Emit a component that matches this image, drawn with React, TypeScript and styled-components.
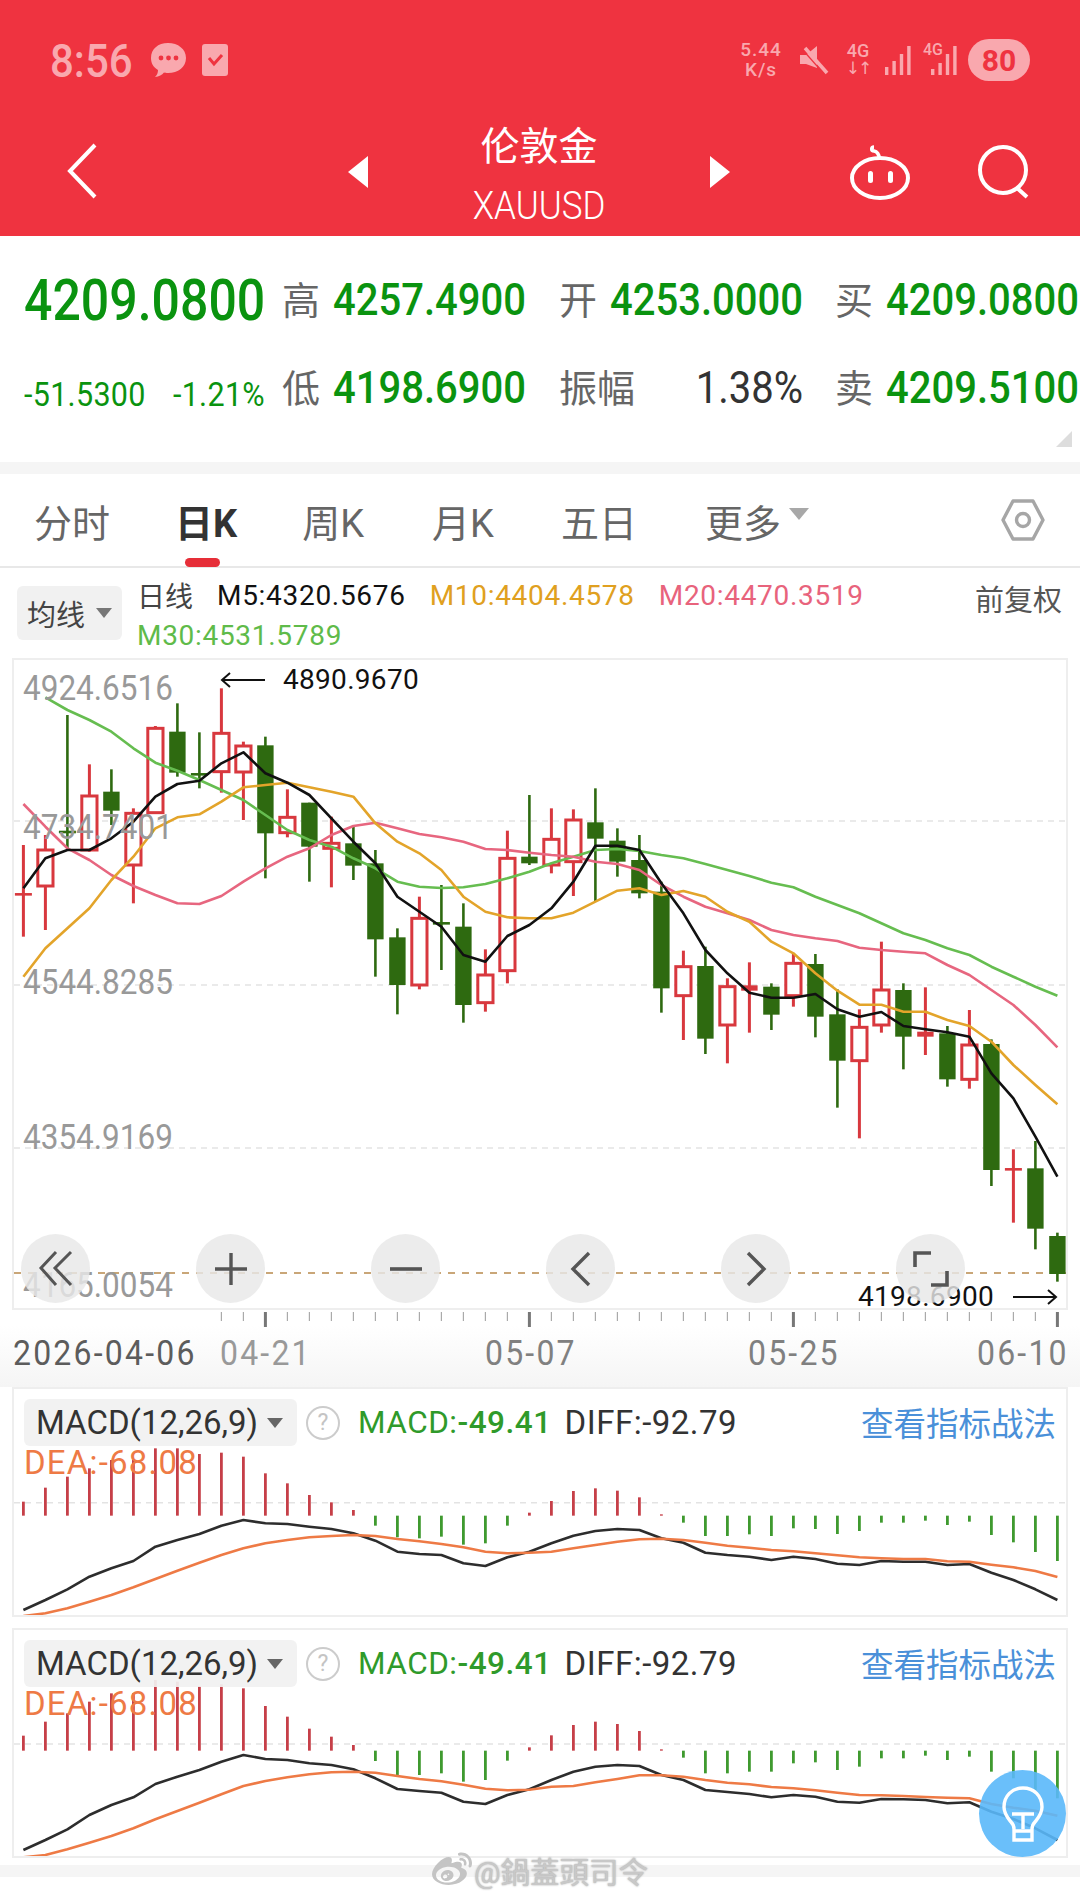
import styled, { createGlobalStyle } from 'styled-components';
import { FaWeibo } from 'react-icons/fa';

const FONT = `Roboto, "Noto Sans CJK SC", sans-serif`;
const GREEN = '#0a930f';
const PINK = '#f9a8ae';

// chart values were read off 3x crops of the picture: y = base + z / 3
const CANDLE_X = (i: number) => 23.4 + 22 * i;
const chartY = (z: number) => 480 + z / 3;
const macdY = (z: number) => 1380 + z / 3;

type Candle = [number, number, number, number, 'r' | 'g' | 'f'];

const CANDLES: Candle[] = [
  [1243, 1247, 1095, 1370, 'f'], [1110, 1218, 1065, 1350, 'r'], [1056, 1060, 705, 1110, 'g'],
  [948, 1110, 853, 1115, 'r'], [935, 992, 868, 1035, 'g'], [1000, 1155, 985, 1270, 'r'],
  [745, 998, 738, 1000, 'r'], [755, 878, 670, 890, 'g'], [883, 887, 757, 925, 'g'],
  [760, 875, 625, 938, 'r'], [798, 876, 785, 1020, 'r'], [796, 1060, 770, 1195, 'g'],
  [1012, 1058, 928, 1072, 'r'], [968, 1100, 968, 1205, 'g'], [1090, 1105, 1010, 1222, 'r'],
  [1090, 1157, 1040, 1200, 'g'], [1150, 1378, 1110, 1490, 'g'], [1372, 1515, 1345, 1603, 'g'],
  [1315, 1515, 1250, 1528, 'r'], [1330, 1334, 1215, 1470, 'g'], [1340, 1575, 1270, 1628, 'g'],
  [1485, 1568, 1408, 1595, 'r'], [1135, 1472, 1052, 1510, 'r'], [1130, 1150, 945, 1155, 'g'],
  [1078, 1155, 985, 1180, 'r'], [1020, 1145, 988, 1248, 'r'], [1027, 1076, 925, 1265, 'g'],
  [1082, 1145, 1045, 1190, 'g'], [1140, 1240, 1065, 1255, 'g'], [1235, 1525, 1205, 1598, 'g'],
  [1460, 1547, 1412, 1680, 'r'], [1458, 1676, 1400, 1722, 'g'], [1520, 1635, 1495, 1750, 'r'],
  [1516, 1532, 1447, 1658, 'f'], [1520, 1604, 1510, 1650, 'g'], [1450, 1547, 1420, 1580, 'r'],
  [1452, 1610, 1422, 1672, 'g'], [1603, 1742, 1528, 1883, 'g'], [1642, 1742, 1588, 1975, 'r'],
  [1530, 1635, 1385, 1658, 'r'], [1530, 1670, 1510, 1768, 'g'], [1655, 1670, 1522, 1725, 'f'],
  [1660, 1798, 1638, 1820, 'g'], [1695, 1798, 1590, 1826, 'r'], [1692, 2070, 1678, 2118, 'g'],
  [2068, 2072, 2008, 2228, 'f'], [2065, 2246, 1983, 2308, 'g'], [2268, 2382, 2258, 2405, 'g'],
];

const M5 = [1225, 1135, 1110, 1110, 1075, 1025, 950, 912, 902, 850, 817, 880, 908, 945, 1015, 1085, 1150, 1250, 1295, 1340, 1425, 1445, 1368, 1335, 1285, 1205, 1097, 1097, 1110, 1210, 1300, 1410, 1480, 1538, 1553, 1553, 1542, 1588, 1610, 1596, 1638, 1648, 1657, 1670, 1780, 1855, 1970, 2090];
const M10 = [1490, 1405, 1345, 1285, 1200, 1130, 1045, 1012, 1003, 965, 922, 915, 908, 922, 935, 950, 1030, 1085, 1120, 1170, 1250, 1295, 1312, 1315, 1315, 1298, 1265, 1232, 1225, 1245, 1233, 1250, 1295, 1325, 1385, 1420, 1480, 1532, 1574, 1574, 1595, 1595, 1620, 1638, 1685, 1755, 1815, 1873];
const M20 = [972, 1040, 1105, 1140, 1185, 1218, 1245, 1270, 1272, 1248, 1205, 1165, 1130, 1105, 1065, 1038, 1028, 1045, 1062, 1072, 1085, 1107, 1110, 1118, 1125, 1130, 1145, 1152, 1170, 1215, 1250, 1280, 1300, 1320, 1350, 1365, 1375, 1383, 1403, 1410, 1415, 1420, 1455, 1485, 1530, 1575, 1635, 1702];
const M30 = [652, 690, 720, 755, 805, 848, 872, 900, 930, 960, 1005, 1050, 1080, 1100, 1135, 1165, 1205, 1220, 1224, 1222, 1212, 1195, 1175, 1150, 1130, 1110, 1107, 1113, 1125, 1135, 1152, 1170, 1188, 1208, 1222, 1250, 1275, 1300, 1330, 1360, 1380, 1405, 1425, 1460, 1490, 1520, 1547];

const MACD_PANELS = [
  {
    top: 1387,
    zero: 368,
    base: 407,
    bars: [365, 323, 290, 265, 240, 240, 205, 205, 222, 218, 230, 280, 310, 345, 367, 390, 437, 472, 475, 470, 494, 490, 437, 398, 363, 333, 325, 332, 352, 403, 428, 468, 468, 463, 468, 445, 447, 462, 453, 428, 428, 422, 435, 425, 465, 487, 516, 543],
    diff: [690, 660, 628, 590, 565, 543, 500, 480, 462, 437, 420, 430, 432, 440, 447, 460, 482, 515, 522, 525, 550, 558, 532, 515, 490, 467, 453, 447, 450, 475, 488, 518, 525, 530, 540, 530, 537, 551, 555, 543, 545, 545, 555, 552, 578, 600, 628, 660],
    dea: [708, 700, 685, 665, 645, 622, 597, 572, 548, 525, 505, 490, 480, 472, 468, 465, 468, 477, 484, 492, 502, 515, 520, 518, 515, 505, 495, 485, 478, 476, 480, 488, 497, 503, 510, 514, 520, 526, 532, 535, 537, 537, 544, 545, 554, 562, 573, 591],
  },
  {
    top: 1628,
    zero: 1092,
    base: 1112,
    bars: [1067, 1025, 1000, 965, 940, 940, 900, 905, 918, 913, 925, 978, 1010, 1046, 1070, 1095, 1143, 1185, 1185, 1180, 1205, 1200, 1142, 1102, 1066, 1035, 1025, 1032, 1053, 1108, 1133, 1180, 1180, 1175, 1175, 1150, 1147, 1170, 1160, 1135, 1135, 1127, 1140, 1130, 1175, 1195, 1230, 1255],
    diff: [1410, 1380, 1348, 1305, 1275, 1252, 1212, 1190, 1170, 1145, 1125, 1137, 1140, 1150, 1155, 1168, 1195, 1227, 1233, 1238, 1265, 1272, 1245, 1228, 1200, 1175, 1160, 1155, 1158, 1185, 1200, 1230, 1236, 1242, 1252, 1245, 1250, 1265, 1268, 1257, 1258, 1260, 1270, 1267, 1295, 1317, 1345, 1380],
    dea: [1432, 1425, 1408, 1388, 1368, 1345, 1318, 1293, 1268, 1243, 1218, 1203, 1192, 1183, 1177, 1175, 1178, 1188, 1197, 1204, 1214, 1226, 1231, 1229, 1220, 1218, 1207, 1197, 1186, 1186, 1190, 1200, 1208, 1213, 1221, 1225, 1231, 1238, 1245, 1246, 1248, 1251, 1253, 1255, 1272, 1283, 1292, 1307],
  },
];

const PRICE_LABELS = [
  { text: '4924.6516', top: 671 },
  { text: '4734.7401', top: 810 },
  { text: '4544.8285', top: 965 },
  { text: '4354.9169', top: 1120 },
  { text: '4165.0054', top: 1268 },
];

const TABS = [
  { label: '分时', gap: 0 },
  { label: '日K', gap: 65, active: true },
  { label: '周K', gap: 65 },
  { label: '月K', gap: 68 },
  { label: '五日', gap: 67 },
  { label: '更多', gap: 68 },
];

const linePath = (values: number[], start: number, toY: (z: number) => number) =>
  values.map((z, i) => `${i ? 'L' : 'M'}${CANDLE_X(i + start).toFixed(1)} ${toY(z).toFixed(1)}`).join(' ');

function CandleChart() {
  return (
    <ChartSvg viewBox="14 660 1052 648">
      {[821, 985, 1148].map((y) => (
        <line key={y} x1="14" x2="1066" y1={y} y2={y} stroke="#e3e3e3" strokeWidth="1.5" strokeDasharray="6 5" />
      ))}
      <line x1="14" x2="1066" y1="1273" y2="1273" stroke="#c9a678" strokeWidth="2" strokeDasharray="7 7" />
      {CANDLES.map(([open, close, high, low, kind], i) => {
        const x = CANDLE_X(i);
        const colour = kind === 'g' ? '#2e6a10' : '#d8383e';
        const thin = close - open < 10;
        return (
          <g key={i}>
            <line x1={x} x2={x} y1={chartY(high)} y2={chartY(low)} stroke={colour} strokeWidth={kind === 'g' ? 2.6 : 3} />
            {thin ? (
              <line x1={x - 8.5} x2={x + 8.5} y1={chartY(open)} y2={chartY(open)} stroke={colour} strokeWidth="2.6" />
            ) : kind === 'r' ? (
              <rect x={x - 7.6} width="15.2" y={chartY(open)} height={(close - open) / 3} fill="#fff" stroke={colour} strokeWidth="3" />
            ) : (
              <rect x={x - 8.2} width="16.4" y={chartY(open)} height={(close - open) / 3} fill={colour} />
            )}
          </g>
        );
      })}
      <MaLine d={linePath(M30, 1, chartY)} stroke="#66bd50" />
      <MaLine d={linePath(M20, 0, chartY)} stroke="#e7667f" />
      <MaLine d={linePath(M10, 0, chartY)} stroke="#e3a42a" />
      <MaLine d={linePath(M5, 0, chartY)} stroke="#111" />
    </ChartSvg>
  );
}

function MacdChart({ panel }: { panel: (typeof MACD_PANELS)[number] }) {
  const zeroY = macdY(panel.zero);
  return (
    <ChartSvg viewBox={`14 ${panel.top + 2} 1052 226`}>
      <line x1="14" x2="1066" y1={zeroY} y2={zeroY} stroke="#e3e3e3" strokeWidth="1.5" strokeDasharray="6 5" />
      {panel.bars.map((z, i) => (
        <line
          key={i}
          x1={CANDLE_X(i)}
          x2={CANDLE_X(i)}
          y1={macdY(panel.base)}
          y2={macdY(z)}
          stroke={z < panel.base ? '#c63f48' : '#3f9a2f'}
          strokeWidth="2.8"
        />
      ))}
      <MaLine d={linePath(panel.diff, 0, macdY)} stroke="#2d2d2d" />
      <MaLine d={linePath(panel.dea, 0, macdY)} stroke="#ee7a45" />
    </ChartSvg>
  );
}

function MacdPanel({ panel }: { panel: (typeof MACD_PANELS)[number] }) {
  return (
    <MacdBox>
      <MacdChart panel={panel} />
      <MacdHead>
        <MacdSelect>
          MACD(12,26,9)
          <DownCaret $size={8} $colour="#666" />
        </MacdSelect>
        <HelpMark>?</HelpMark>
        <MacdValue $colour="#2f9a2a" $size={31.5}>
          MACD:<b>-49.41</b>
        </MacdValue>
        <MacdValue $colour="#333" $size={33} $gap={13}>DIFF:-92.79</MacdValue>
        <StrategyLink>查看指标战法</StrategyLink>
      </MacdHead>
      <DeaText>DEA:-68.08</DeaText>
    </MacdBox>
  );
}

function App() {
  return (
    <Page>
      <GlobalStyle />
      <Header>
        <StatusBar>
          <Clock>8:56</Clock>
          <svg width="37" height="36" viewBox="0 0 37 36">
            <path d="M18 1c10 0 18 6 18 15s-8 15-18 15c-2 0-3 0-4-.4C12 33 9 35 5 35c2-2 3-4 3-7C3 25 1 21 1 16 1 7 8 1 18 1Z" fill={PINK} />
            <circle cx="11" cy="16" r="2.4" fill="#ef3340" />
            <circle cx="18.5" cy="16" r="2.4" fill="#ef3340" />
            <circle cx="26" cy="16" r="2.4" fill="#ef3340" />
          </svg>
          <TaskIcon width="26" height="32" viewBox="0 0 26 32">
            <rect width="26" height="32" rx="3" fill={PINK} />
            <path d="M7 14l5 6 8-9" fill="none" stroke="#ef3340" strokeWidth="3" />
          </TaskIcon>
          <StatusRight>
            <NetSpeed>
              5.44
              <br />
              K/s
            </NetSpeed>
            <svg width="33" height="30" viewBox="0 0 33 30">
              <path d="M2 10h6l11-9v22L8 19H2Z" fill={PINK} />
              <path d="M7 3l22 25" stroke={PINK} strokeWidth="3.6" />
              <path d="M7 3l22 25" stroke="#ef3340" strokeWidth="1.2" transform="translate(-3 1)" />
            </svg>
            <NetType>
              4G
              <ArrowGlyph>↓↑</ArrowGlyph>
            </NetType>
            <SignalBars width="27" height="30" viewBox="0 0 27 30">
              {[22, 16, 9, 1].map((y, i) => (
                <rect key={y} x={i * 7.4} y={y} width="3.4" height={30 - y} fill={PINK} />
              ))}
            </SignalBars>
            <SignalGroup>
              <SmallNet>4G</SmallNet>
              <svg width="27" height="30" viewBox="0 0 27 30">
                {[24, 18, 9, 1].map((y, i) => (
                  <rect key={y} x={i * 7.4} y={y} width="3.4" height={30 - y} fill={PINK} />
                ))}
              </svg>
            </SignalGroup>
            <Battery>80</Battery>
          </StatusRight>
        </StatusBar>
        <NavRow>
          <BackIcon width="30" height="56" viewBox="0 0 30 56">
            <path d="M28 2 3 28l25 26" fill="none" stroke="#fff" strokeWidth="4" />
          </BackIcon>
          <NavArrow $left />
          <TitleBlock>
            <Title>伦敦金</Title>
            <Symbol>XAUUSD</Symbol>
          </TitleBlock>
          <NavArrow />
          <RobotIcon width="62" height="56" viewBox="0 0 62 56">
            <path d="M25 3c-3 0-3 4 0 4 3 .5 5 3 5.500 8" fill="none" stroke="#fff" strokeWidth="3.6" />
            <ellipse cx="31" cy="34" rx="28" ry="20" fill="none" stroke="#fff" strokeWidth="4" />
            <rect x="19" y="27" width="5" height="12" rx="2.5" fill="#fff" />
            <rect x="39" y="27" width="5" height="12" rx="2.5" fill="#fff" />
          </RobotIcon>
          <SearchIcon width="54" height="54" viewBox="0 0 54 54">
            <circle cx="26" cy="25" r="23" fill="none" stroke="#fff" strokeWidth="4" />
            <path d="M40 43l10 9" fill="none" stroke="#fff" strokeWidth="4" />
          </SearchIcon>
        </NavRow>
      </Header>

      <QuoteGrid>
        <BigPrice>4209.0800</BigPrice>
        <QuoteCell>
          <QuoteLabel>高</QuoteLabel>
          <QuoteValue>4257.4900</QuoteValue>
        </QuoteCell>
        <QuoteCell>
          <QuoteLabel>开</QuoteLabel>
          <QuoteValue>4253.0000</QuoteValue>
        </QuoteCell>
        <QuoteCell>
          <QuoteLabel>买</QuoteLabel>
          <QuoteValue>4209.0800</QuoteValue>
        </QuoteCell>
        <ChangeRow>
          <span>-51.5300</span>
          <span>-1.21%</span>
        </ChangeRow>
        <QuoteCell>
          <QuoteLabel>低</QuoteLabel>
          <QuoteValue>4198.6900</QuoteValue>
        </QuoteCell>
        <QuoteCell>
          <QuoteLabel>振幅</QuoteLabel>
          <QuoteValue $plain>1.38%</QuoteValue>
        </QuoteCell>
        <QuoteCell>
          <QuoteLabel>卖</QuoteLabel>
          <QuoteValue>4209.5100</QuoteValue>
        </QuoteCell>
        <CornerMark />
      </QuoteGrid>
      <GreyBand />

      <TabBar>
        {TABS.map((tab) => (
          <Tab key={tab.label} $gap={tab.gap} $active={tab.active}>
            {tab.label}
          </Tab>
        ))}
        <MoreCaret $size={10} $colour="#a8a8a8" />
        <HexIcon width="44" height="42" viewBox="0 0 44 42">
          <path d="M12 2h20l10 19-10 19H12L2 21Z" fill="none" stroke="#a6a6a6" strokeWidth="3.4" strokeLinejoin="round" />
          <circle cx="22" cy="21" r="6.5" fill="none" stroke="#a6a6a6" strokeWidth="3.4" />
        </HexIcon>
      </TabBar>

      <IndicatorBar>
        <MaSelect>
          均线
          <DownCaret $size={8} $colour="#777" />
        </MaSelect>
        <MaLegend>
          <LegendRow>
            <LegendItem $colour="#444" $cjk>日线</LegendItem>
            <LegendItem $colour="#111">M5:4320.5676</LegendItem>
            <LegendItem $colour="#e0a020">M10:4404.4578</LegendItem>
            <LegendItem $colour="#e8637c">M20:4470.3519</LegendItem>
          </LegendRow>
          <LegendRow>
            <LegendItem $colour="#5fbb4a">M30:4531.5789</LegendItem>
          </LegendRow>
        </MaLegend>
        <AdjustLabel>前复权</AdjustLabel>
      </IndicatorBar>

      <ChartBox>
        <CandleChart />
        {PRICE_LABELS.map((label) => (
          <PriceLabel key={label.text} $top={label.top - 660}>
            {label.text}
          </PriceLabel>
        ))}
        <HighNote>
          <svg width="46" height="16" viewBox="0 0 46 16">
            <path d="M45 8H2M10 1 2 8l8 7" fill="none" stroke="#111" strokeWidth="2" />
          </svg>
          4890.9670
        </HighNote>
        <LowNote>
          4198.6900
          <svg width="46" height="16" viewBox="0 0 46 16">
            <path d="M1 8h43M36 1l8 7-8 7" fill="none" stroke="#111" strokeWidth="2" />
          </svg>
        </LowNote>
        <ZoomBar>
          <ZoomButton>
            <svg width="36" height="38" viewBox="0 0 36 38">
              <path d="M18 2 3 18l15 17M33 2 17 18l16 17" fill="none" stroke="#555" strokeWidth="3" />
            </svg>
          </ZoomButton>
          <ZoomButton>
            <svg width="34" height="34" viewBox="0 0 34 34">
              <path d="M1 17h32M17 1v32" fill="none" stroke="#555" strokeWidth="3.4" />
            </svg>
          </ZoomButton>
          <ZoomButton>
            <svg width="34" height="34" viewBox="0 0 34 34">
              <path d="M1 17h32" fill="none" stroke="#555" strokeWidth="3.6" />
            </svg>
          </ZoomButton>
          <ZoomButton>
            <svg width="22" height="36" viewBox="0 0 22 36">
              <path d="M19 2 3 18l16 16" fill="none" stroke="#555" strokeWidth="3.4" />
            </svg>
          </ZoomButton>
          <ZoomButton>
            <svg width="22" height="36" viewBox="0 0 22 36">
              <path d="M3 2l16 16L3 34" fill="none" stroke="#555" strokeWidth="3.4" />
            </svg>
          </ZoomButton>
          <ZoomButton>
            <svg width="38" height="38" viewBox="0 0 38 38">
              <path d="M19 3H3v14M19 35h16V21" fill="none" stroke="#555" strokeWidth="3.6" />
            </svg>
          </ZoomButton>
        </ZoomBar>
      </ChartBox>

      <AxisBox>
        <TickStrip viewBox="12 1310 1056 20" width="1056" height="20">
          {CANDLES.map((_, i) => {
            if (i < 9) return null;
            const major = (i - 11) % 12 === 0;
            return (
              <line
                key={i}
                x1={CANDLE_X(i)}
                x2={CANDLE_X(i)}
                y1="1312"
                y2={major ? 1327 : 1321}
                stroke={major ? '#777' : '#aaa'}
                strokeWidth={major ? 3 : 1.2}
              />
            );
          })}
        </TickStrip>
        <DateRow>
          <DateLabel>2026-04-06</DateLabel>
          <DateLabel $faded>04-21</DateLabel>
          <DateLabel $muted>05-07</DateLabel>
          <DateLabel $muted>05-25</DateLabel>
          <DateLabel $muted>06-10</DateLabel>
        </DateRow>
      </AxisBox>

      <MacdList>
        {MACD_PANELS.map((panel) => (
          <MacdPanel key={panel.top} panel={panel} />
        ))}
      </MacdList>
      <BottomBand />

      <BulbButton>
        <svg width="42" height="56" viewBox="0 0 42 56">
          <path d="M21 2C10 2 2 10 2 21c0 7 4 11 7 15 2 2 3 4 3 7v11h18V43c0-3 1-5 3-7 3-4 7-8 7-15C40 10 32 2 21 2Z" fill="none" stroke="#fff" strokeWidth="3.4" />
          <path d="M10 28h22M21 28v15M12 45h18" fill="none" stroke="#fff" strokeWidth="3.4" />
        </svg>
      </BulbButton>
      <Watermark>
        <FaWeibo size={40} color="#c4c4c4" />
        @鍋蓋頭司令
      </Watermark>
    </Page>
  );
}

const GlobalStyle = createGlobalStyle`
  html, body {
    margin: 0;
    padding: 0;
    background: #fff;
  }
  * {
    box-sizing: border-box;
  }
`;

const Page = styled.div`
  position: relative;
  width: 1080px;
  height: 1899px;
  overflow: hidden;
  background: #fff;
  font-family: ${FONT};
`;

const Header = styled.header`
  height: 236px;
  background: #ef3340;
`;

const StatusBar = styled.div`
  display: flex;
  align-items: center;
  height: 126px;
  padding: 39px 50px 45px 50px;
`;

const Clock = styled.span`
  width: 100px;
  font-size: 42px;
  font-weight: 500;
  color: ${PINK};
  transform: scaleY(1.12);
`;

const TaskIcon = styled.svg`
  margin-left: 15px;
`;

const StatusRight = styled.div`
  display: flex;
  align-items: center;
  margin-left: auto;
`;

const NetSpeed = styled.div`
  width: 44px;
  font-size: 19px;
  font-weight: 500;
  line-height: 20px;
  letter-spacing: 1px;
  text-align: center;
  color: ${PINK};
  margin-right: 15px;
`;

const NetType = styled.div`
  display: flex;
  flex-direction: column;
  align-items: center;
  width: 24px;
  margin-left: 15px;
  font-size: 18px;
  font-weight: 500;
  line-height: 16px;
  color: ${PINK};
`;

const ArrowGlyph = styled.span`
  font-family: "DejaVu Sans", sans-serif;
  font-size: 17px;
  line-height: 18px;
  letter-spacing: -2px;
`;

const SignalBars = styled.svg`
  margin-left: 15px;
`;

const SignalGroup = styled.div`
  display: flex;
  align-items: flex-end;
  justify-content: flex-end;
  position: relative;
  width: 35px;
  margin-left: 11px;
`;

const SmallNet = styled.span`
  position: absolute;
  left: 0;
  top: -5px;
  font-size: 16px;
  font-weight: 500;
  color: ${PINK};
`;

const Battery = styled.div`
  display: flex;
  align-items: center;
  justify-content: center;
  width: 62px;
  height: 42px;
  margin-left: 10px;
  border-radius: 21px;
  background: ${PINK};
  color: #ef3340;
  font-size: 30px;
  font-weight: 700;
`;

const NavRow = styled.div`
  display: flex;
  align-items: center;
  height: 92px;
  padding-left: 67px;
`;

const BackIcon = styled.svg`
  margin: -3px 251px 0 0;
`;

const NavArrow = styled.div<{ $left?: boolean }>`
  width: 0;
  height: 0;
  border-top: 16px solid transparent;
  border-bottom: 16px solid transparent;
  ${(p) => (p.$left ? 'border-right: 20px solid #fff;' : 'border-left: 20px solid #fff;')}
`;

const TitleBlock = styled.div`
  display: flex;
  flex-direction: column;
  align-items: center;
  width: 342px;
  padding-top: 6px;
  color: #fff;
`;

const Title = styled.div`
  margin-top: -4px;
  font-size: 39px;
  line-height: 50px;
`;

const Symbol = styled.div`
  margin-top: 18px;
  font-size: 35px;
  line-height: 34px;
  font-weight: 300;
  transform: scaleY(1.1);
`;

const RobotIcon = styled.svg`
  margin-left: 119px;
`;

const SearchIcon = styled.svg`
  margin-left: 66px;
`;

const QuoteGrid = styled.section`
  position: relative;
  display: grid;
  grid-template-columns: 258px 277px 276px 1fr;
  grid-auto-rows: 88px;
  align-items: center;
  height: 226px;
  padding: 20px 0 0 24px;
`;

const BigPrice = styled.div`
  font-size: 50px;
  font-weight: 500;
  color: ${GREEN};
  transform: scaleY(1.15);
`;

const ChangeRow = styled.div`
  display: flex;
  justify-content: space-between;
  width: 241px;
  padding-top: 10px;
  font-size: 30.5px;
  letter-spacing: 0.3px;
  color: ${GREEN};
  transform: scaleY(1.1);
`;

const QuoteCell = styled.div`
  display: flex;
  align-items: center;
  justify-content: space-between;
  width: 244px;
`;

const QuoteLabel = styled.span`
  margin-top: -6px;
  font-size: 38px;
  color: #666;
`;

const QuoteValue = styled.span<{ $plain?: boolean }>`
  font-size: 40px;
  color: ${(p) => (p.$plain ? '#333' : GREEN)};
  font-weight: ${(p) => (p.$plain ? 400 : 500)};
  transform: scaleY(1.1);
`;

const CornerMark = styled.div`
  position: absolute;
  right: 8px;
  bottom: 15px;
  width: 0;
  height: 0;
  border-left: 16px solid transparent;
  border-bottom: 16px solid #ddd;
`;

const GreyBand = styled.div`
  height: 12px;
  background: #f5f5f5;
`;

const TabBar = styled.nav`
  display: flex;
  align-items: center;
  height: 94px;
  padding: 0 35px 0 34px;
  border-bottom: 2px solid #e8e8e8;
`;

const Tab = styled.div<{ $gap: number; $active?: boolean }>`
  position: relative;
  margin-left: ${(p) => p.$gap}px;
  font-size: 38px;
  font-weight: ${(p) => (p.$active ? 700 : 400)};
  color: ${(p) => (p.$active ? '#333' : '#666')};

  ${(p) =>
    p.$active &&
    `
    &::after {
      content: '';
      position: absolute;
      left: 10px;
      bottom: -19px;
      width: 35px;
      height: 9px;
      border-radius: 5px;
      background: #e62e38;
    }
  `}
`;

const DownCaret = styled.i<{ $size: number; $colour: string }>`
  display: inline-block;
  width: 0;
  height: 0;
  border-left: ${(p) => p.$size}px solid transparent;
  border-right: ${(p) => p.$size}px solid transparent;
  border-top: ${(p) => p.$size + 2}px solid ${(p) => p.$colour};
`;

const MoreCaret = styled(DownCaret)`
  margin: -12px 0 0 8px;
`;

const HexIcon = styled.svg`
  margin-left: auto;
`;

const IndicatorBar = styled.div`
  display: flex;
  align-items: flex-start;
  height: 90px;
  padding: 18px 18px 0 17px;
`;

const MaSelect = styled.div`
  display: flex;
  align-items: center;
  justify-content: space-between;
  width: 105px;
  height: 54px;
  padding: 0 10px;
  border-radius: 6px;
  background: #f1f1f1;
  font-size: 29px;
  color: #444;
`;

const MaLegend = styled.div`
  margin: -11px 0 0 15px;
`;

const LegendRow = styled.div`
  display: flex;
  gap: 24px;
  height: 40px;
  align-items: center;
`;

const LegendItem = styled.span<{ $colour: string; $cjk?: boolean }>`
  font-size: 28px;
  letter-spacing: ${(p) => (p.$cjk ? 0 : 0.7)}px;
  color: ${(p) => p.$colour};
`;

const AdjustLabel = styled.div`
  margin-left: auto;
  margin-top: -9px;
  font-size: 29px;
  color: #555;
`;

const ChartBox = styled.div`
  position: relative;
  width: 1056px;
  height: 652px;
  margin-left: 12px;
  border: 2px solid #eee;
`;

const ChartSvg = styled.svg`
  position: absolute;
  inset: 0;
  width: 100%;
  height: 100%;
`;

const MaLine = styled.path`
  fill: none;
  stroke-width: 2.6px;
  stroke-linejoin: round;
`;

const PriceLabel = styled.div<{ $top: number }>`
  position: absolute;
  left: 9px;
  top: ${(p) => p.$top}px;
  font-size: 31.5px;
  line-height: 36px;
  color: #999;
  transform: scaleY(1.1);
`;

const HighNote = styled.div`
  position: absolute;
  left: 206px;
  top: 3px;
  display: flex;
  align-items: center;
  gap: 17px;
  font-size: 28px;
  color: #111;
  letter-spacing: 0.3px;
`;

const LowNote = styled.div`
  position: absolute;
  right: 8px;
  bottom: -5px;
  display: flex;
  align-items: center;
  gap: 18px;
  font-size: 28px;
  color: #111;
  letter-spacing: 0.3px;
`;

const ZoomBar = styled.div`
  position: absolute;
  left: 7px;
  top: 574px;
  display: flex;
  gap: 106px;
`;

const ZoomButton = styled.div`
  display: flex;
  align-items: center;
  justify-content: center;
  width: 69px;
  height: 69px;
  border-radius: 50%;
  background: rgba(232, 232, 232, 0.82);
`;

const AxisBox = styled.div`
  height: 77px;
  background: linear-gradient(to bottom, #fff 20%, #f5f5f5);
`;

const TickStrip = styled.svg`
  display: block;
  margin-left: 12px;
`;

const DateRow = styled.div`
  display: grid;
  grid-template-columns: 207px 265px 263px 229px auto;
  padding: 4px 0 0 13px;
`;

const DateLabel = styled.span<{ $faded?: boolean; $muted?: boolean }>`
  font-size: 32px;
  letter-spacing: 2.2px;
  line-height: 38px;
  color: ${(p) => (p.$faded ? '#999' : p.$muted ? '#808080' : '#5c5c5c')};
  transform: scaleY(1.08);
`;

const MacdList = styled.div`
  display: flex;
  flex-direction: column;
  gap: 11px;
  margin-left: 12px;
`;

const MacdBox = styled.div`
  position: relative;
  width: 1056px;
  height: 230px;
  padding: 10px 0 0 10px;
  background: #fff;
  border: 2px solid #eee;
`;

const MacdHead = styled.div`
  position: relative;
  display: flex;
  align-items: center;
  padding-right: 10px;
`;

const MacdSelect = styled.div`
  display: flex;
  align-items: center;
  justify-content: space-between;
  width: 273px;
  height: 47px;
  padding: 0 14px 0 12px;
  border-radius: 6px;
  background: rgba(241, 241, 241, 0.92);
  font-size: 33px;
  color: #333;
`;

const HelpMark = styled.div`
  display: flex;
  align-items: center;
  justify-content: center;
  width: 34px;
  height: 34px;
  margin: 0 18px 0 9px;
  border: 2.5px solid #ccc;
  border-radius: 50%;
  font-size: 23px;
  color: #c4c4c4;
`;

const MacdValue = styled.span<{ $colour: string; $size: number; $gap?: number }>`
  margin-left: ${(p) => p.$gap ?? 0}px;
  font-size: ${(p) => p.$size}px;
  letter-spacing: 0.5px;
  color: ${(p) => p.$colour};

  b {
    font-weight: 500;
  }
`;

const StrategyLink = styled.span`
  margin: -3px 0 0 auto;
  font-size: 32.5px;
  color: #4a90d9;
`;

const DeaText = styled.div`
  position: relative;
  margin-top: 0;
  font-size: 33px;
  letter-spacing: 1.2px;
  line-height: 34px;
  color: #ee7a45;
`;

const BottomBand = styled.div`
  height: 12px;
  margin-top: 7px;
  background: #f5f5f5;
`;

const BulbButton = styled.div`
  position: absolute;
  left: 979px;
  top: 1770px;
  display: flex;
  align-items: center;
  justify-content: center;
  width: 87px;
  height: 87px;
  border-radius: 50%;
  background: rgba(90, 184, 250, 0.9);
`;

const Watermark = styled.div`
  position: absolute;
  left: 432px;
  top: 1849px;
  display: flex;
  align-items: center;
  gap: 2px;
  font-size: 29.5px;
  color: #c8c8c8;
  text-shadow: 0 0 2px #999;
`;

export default App;
